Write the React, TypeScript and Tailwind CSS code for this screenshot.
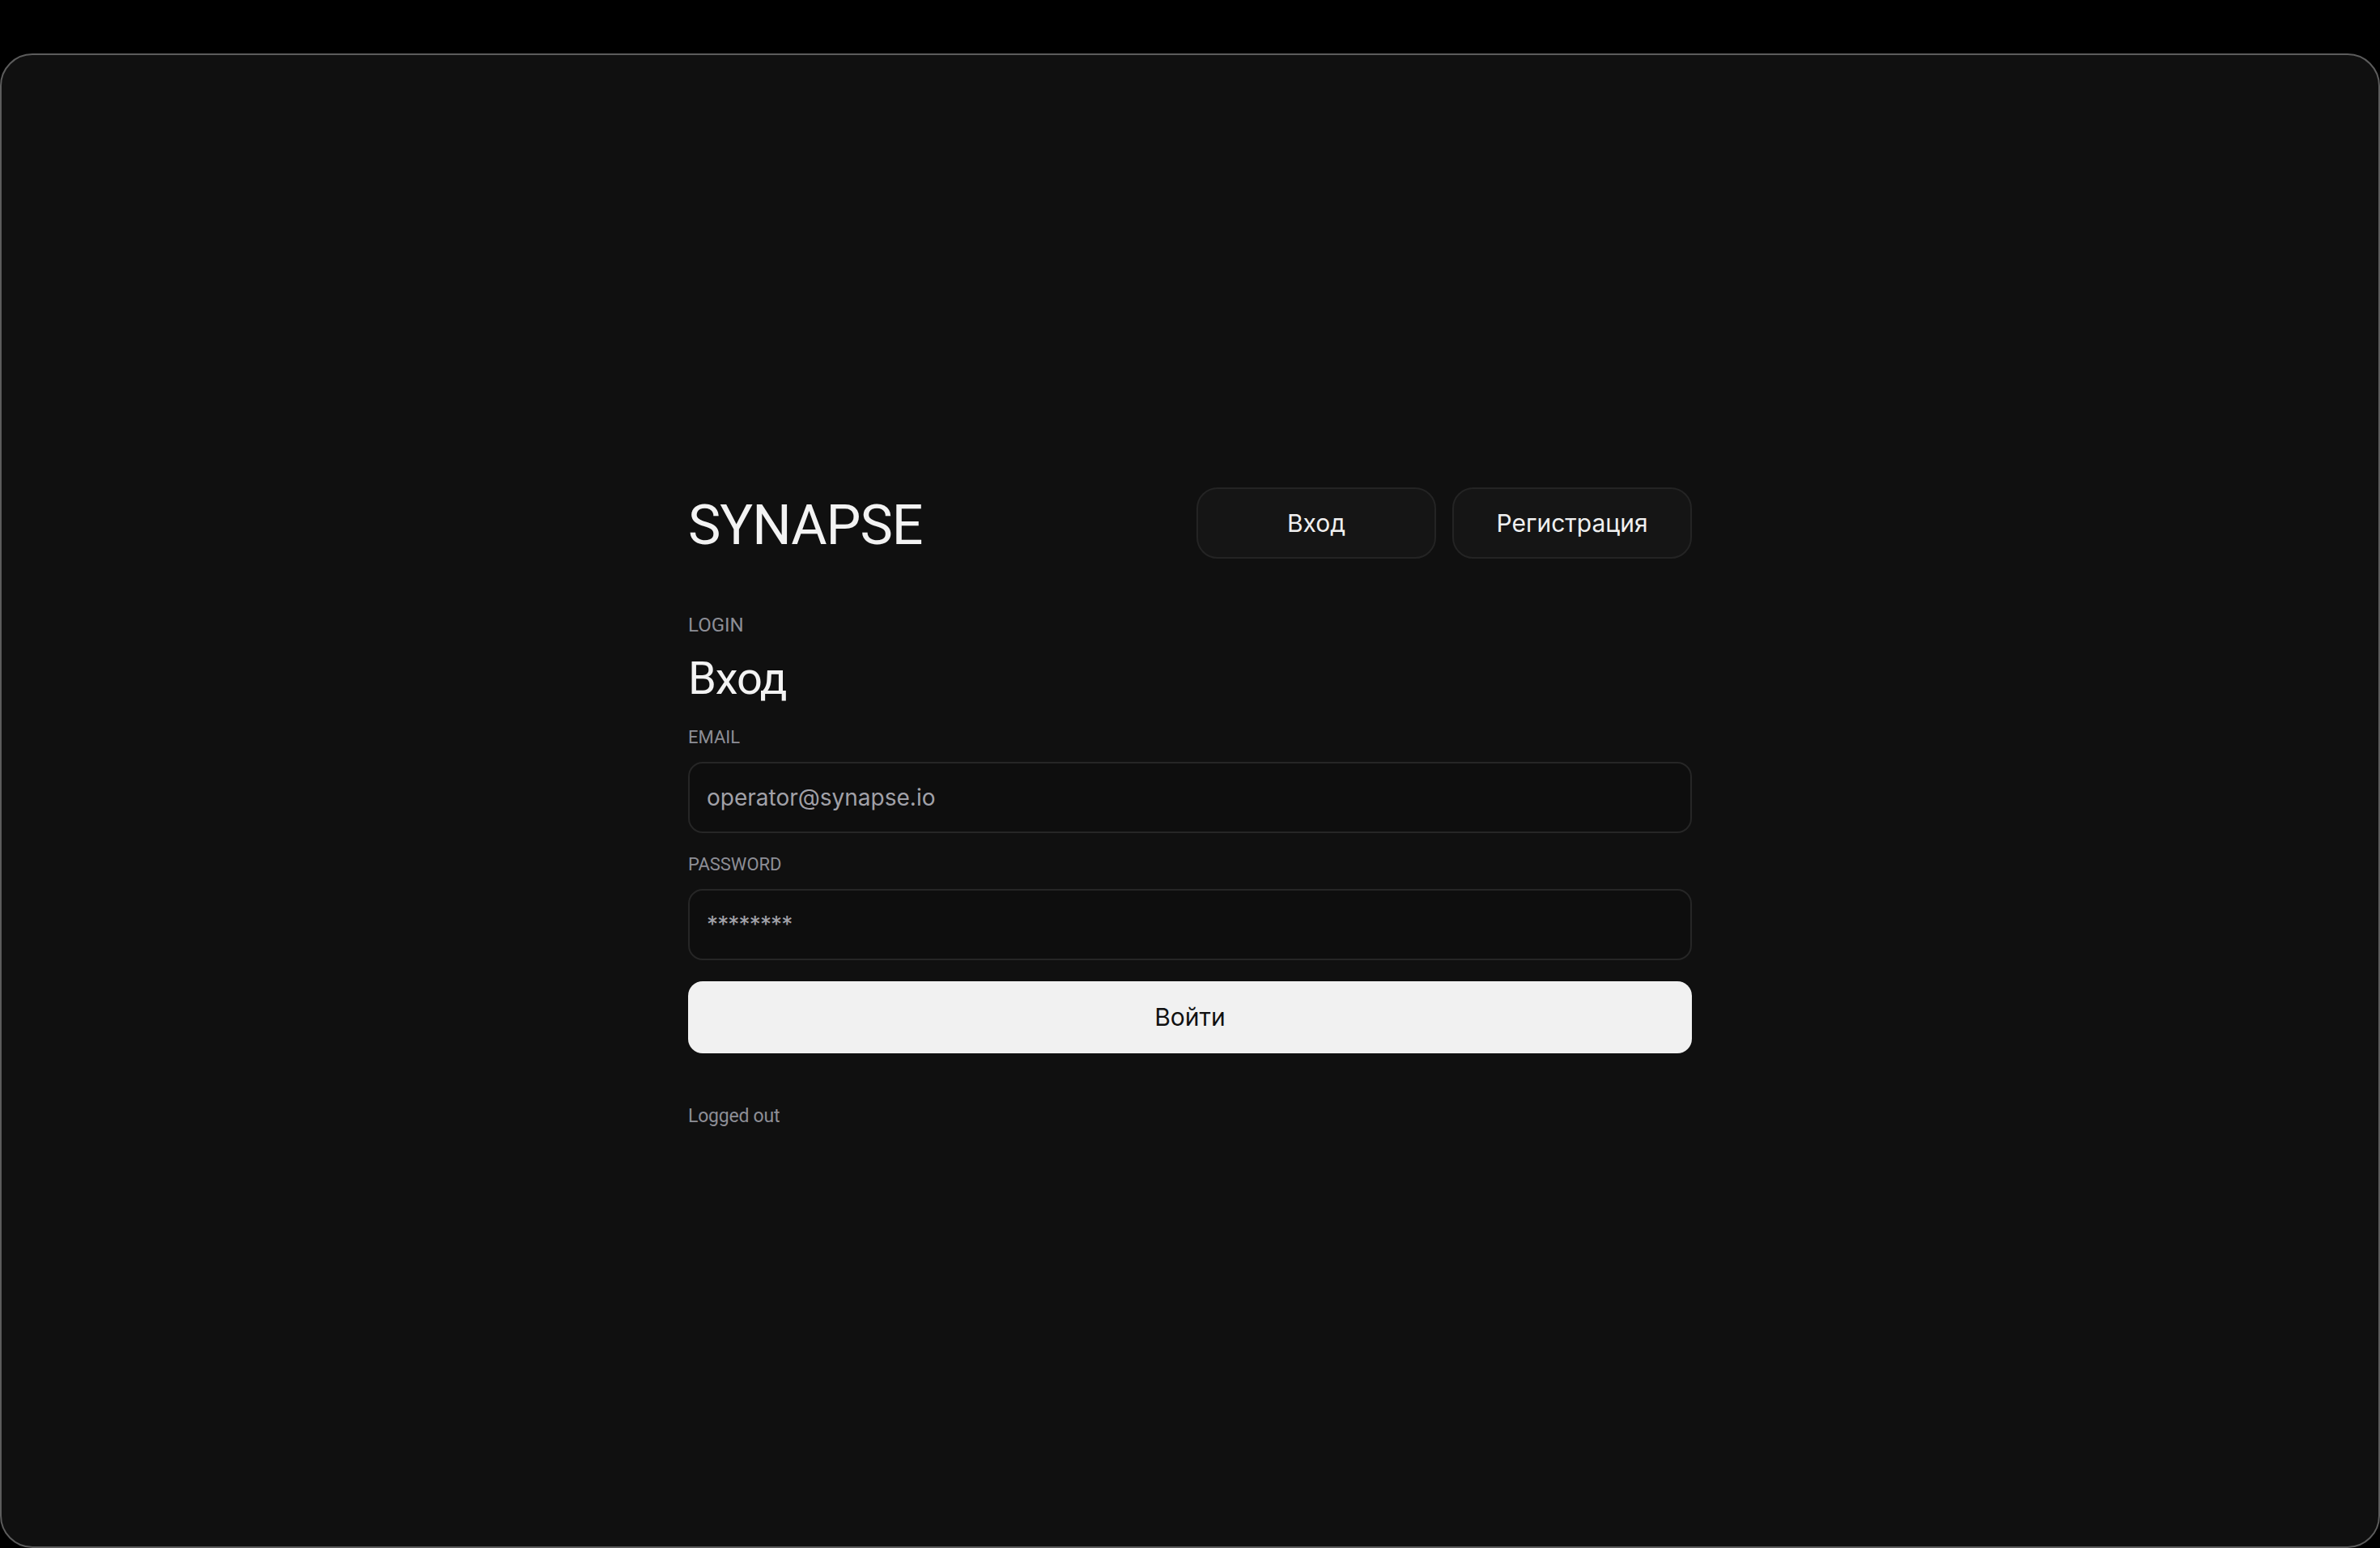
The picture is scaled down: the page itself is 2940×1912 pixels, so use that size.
import { useState } from 'react';

const roboto = { fontFamily: 'Roboto, "Liberation Sans", sans-serif' };

function Field({
  label,
  value,
  onChange,
  tight,
}: {
  label: string;
  value: string;
  onChange: (v: string) => void;
  tight?: boolean;
}) {
  return (
    <div className="flex flex-col">
      <label className="text-[22px] leading-[22px] text-[#8d8e96] font-['Roboto',sans-serif]">{label}</label>
      <input
        value={value}
        onChange={(e) => onChange(e.target.value)}
        className={
          tight
            ? "mt-[19px] h-[88px] w-full rounded-[18px] border-2 border-[#262626] bg-[#0e0e0e] px-[21px] text-[28px] tracking-[-0.03em] text-[#a1a1a8] outline-none font-['Inter',sans-serif]"
            : "mt-[19px] h-[88px] w-full rounded-[18px] border-2 border-[#262626] bg-[#0e0e0e] px-[21px] text-[28px] text-[#a1a1a8] outline-none font-['Inter',sans-serif]"
        }
      />
    </div>
  );
}

export default function App() {
  const [mode, setMode] = useState<'login' | 'register'>('login');
  const [email, setEmail] = useState('operator@synapse.io');
  const [password, setPassword] = useState('********');

  return (
    <div className="min-h-screen bg-black pt-[66px]">
      <div className="flex h-[1846px] justify-center rounded-[40px] border-2 border-[#5c5c5c] bg-[#101010] pt-[534px]">
        <div className="flex w-[1240px] flex-col">
          {/* header */}
          <div className="flex items-center justify-between">
            <h1 className="pt-[5px] text-[68px] leading-[68px] tracking-[-0.015em] text-[#f3f3f3]" style={roboto}>
              SYNAPSE
            </h1>
            <div className="flex gap-[20px]">
              <button
                onClick={() => setMode('login')}
                className="h-[88px] w-[296px] rounded-[26px] border-2 border-[#242424] bg-[#151515] text-[30px] text-[#f0f0f0] font-['Inter',sans-serif]"
              >
                Вход
              </button>
              <button
                onClick={() => setMode('register')}
                className="h-[88px] w-[296px] rounded-[26px] border-2 border-[#242424] bg-[#151515] text-[30px] text-[#f0f0f0] font-['Inter',sans-serif]"
              >
                Регистрация
              </button>
            </div>
          </div>

          <div className="mt-[70px] text-[24px] leading-[24px] text-[#8d8e96]" style={roboto}>
            {mode === 'login' ? 'LOGIN' : 'REGISTER'}
          </div>
          <h2 className="mt-[26px] text-[56px] leading-[56px] tracking-[-0.02em] text-[#f3f3f3]" style={roboto}>
            {mode === 'login' ? 'Вход' : 'Регистрация'}
          </h2>

          <div className="mt-[34px]">
            <Field label="EMAIL" value={email} onChange={setEmail} />
          </div>
          <div className="mt-[28px]">
            <Field label="PASSWORD" value={password} onChange={setPassword} tight />
          </div>

          <button className="mt-[26px] h-[89px] w-full rounded-[18px] bg-[#f1f1f1] text-[30px] text-[#111111] font-['Inter',sans-serif]">
            Войти
          </button>

          <div className="mt-[66px] text-[23px] leading-[23px] tracking-[-0.01em] text-[#8d8e96]" style={roboto}>
            Logged out
          </div>
        </div>
      </div>
    </div>
  );
}
